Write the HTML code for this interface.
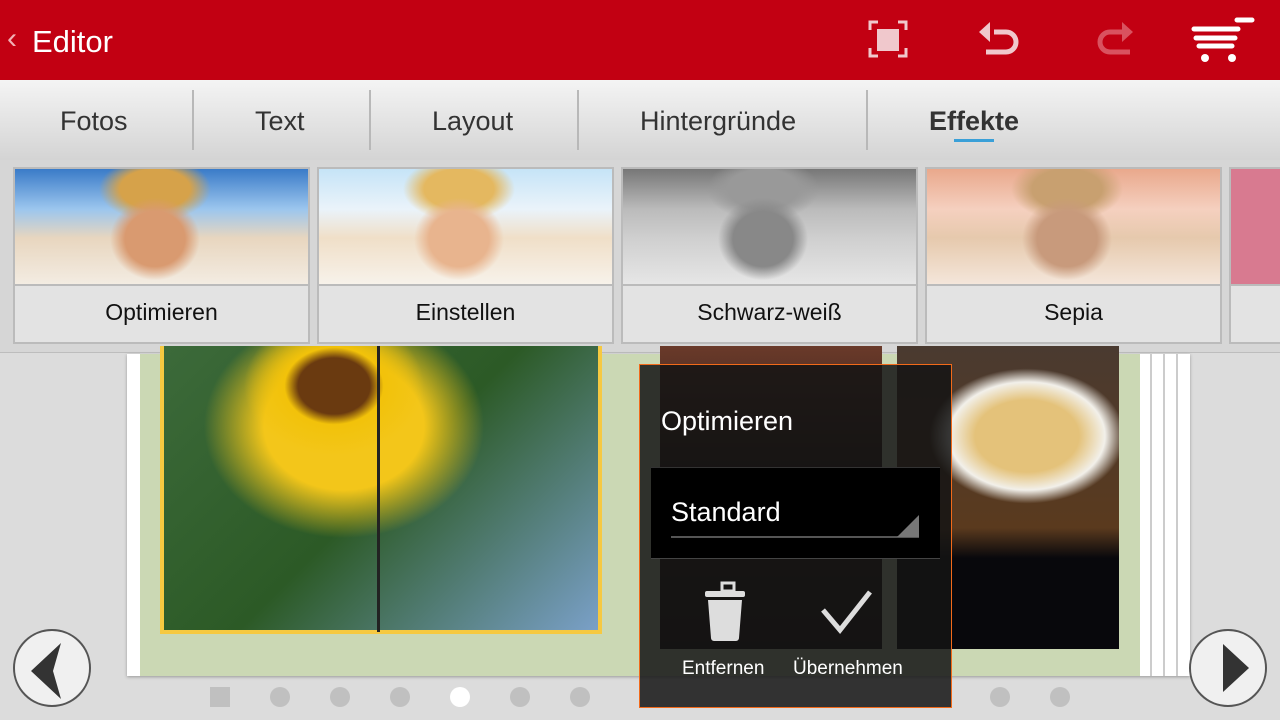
<!DOCTYPE html>
<html><head><meta charset="utf-8"><style>
*{margin:0;padding:0;box-sizing:border-box}
body{width:1280px;height:720px;overflow:hidden;background:#dcdcdc;font-family:"Liberation Sans",sans-serif;position:relative}
.abs{position:absolute}
#hdr{left:0;top:0;width:1280px;height:80px;background:#c20012}
#tabs{left:0;top:80px;width:1280px;height:80px;background:linear-gradient(#f4f4f4,#d4d4d4)}
.tab{position:absolute;top:106px;font-size:27px;color:#333}
.sep{position:absolute;top:90px;width:2px;height:60px;background:#b8b8b8}
#strip{left:0;top:160px;width:1280px;height:193px;background:#d6d6d6;border-bottom:1px solid #bdbdbd}
.th{position:absolute;top:167px;width:297px;height:177px;border:2px solid #bbb;background:#e3e3e3}
.th .im{height:117px;border-bottom:2px solid #bbb}
.th .lb{text-align:center;font-size:23px;color:#111;line-height:52px}
.dot{position:absolute;top:687px;width:20px;height:20px;border-radius:50%;background:#c0c0c0}
.nav{position:absolute;top:629px;width:78px;height:78px;border-radius:50%;border:2px solid #555;background:#f0f0f0}
</style></head><body>
<div id="hdr" class="abs"></div>
<div class="abs" style="left:7px;top:22px;color:#f2b0b5;font-size:30px">‹</div>
<div class="abs" style="left:32px;top:24px;color:#fff;font-size:31px">Editor</div>
<svg class="abs" style="left:860px;top:14px" width="400" height="56" viewBox="860 14 400 56">
<g fill="none" stroke="#f0c8cc" stroke-width="3"><path d="M870 30v-8h8M898 22h8v8M906 48v8h-8M878 56h-8v-8"/></g>
<rect x="877" y="29" width="22" height="22" fill="#f0c8cc"/>
<path d="M986 43h20a10 10 0 0 0 0-20h-12" fill="none" stroke="#f0c8cc" stroke-width="5" transform="translate(0,9)"/>
<path d="M979 32l11-10v20z" fill="#f0c8cc"/>
<path d="M1130 52h-20a10 10 0 0 1 0-20h12" fill="none" stroke="#d9525f" stroke-width="5"/>
<path d="M1133 32l-11-10v20z" fill="#d9525f"/>
<g stroke="#fff" stroke-width="5" stroke-linecap="round"><path d="M1237 20h15M1194 29h44M1196 38h39M1199 46h33"/></g>
<circle cx="1205" cy="58" r="4" fill="#fff"/><circle cx="1232" cy="58" r="4" fill="#fff"/>
</svg>
<div id="tabs" class="abs"></div>
<div class="tab" style="left:60px">Fotos</div><div class="sep" style="left:192px"></div>
<div class="tab" style="left:255px">Text</div><div class="sep" style="left:369px"></div>
<div class="tab" style="left:432px">Layout</div><div class="sep" style="left:577px"></div>
<div class="tab" style="left:640px">Hintergründe</div><div class="sep" style="left:866px"></div>
<div class="tab" style="left:929px;font-weight:bold">Effekte</div>
<div class="abs" style="left:954px;top:139px;width:40px;height:3px;background:#3aa0d8"></div>
<div id="strip" class="abs"></div>
<div class="th" style="left:13px"><div class="im" style="background:radial-gradient(ellipse 60px 55px at 140px 70px,#d99a70 50%,transparent 75%),radial-gradient(ellipse 70px 40px at 140px 20px,#d6a24a 50%,transparent 80%),linear-gradient(180deg,#3a7bc8 0%,#9cc6ee 35%,#e8d6bf 60%,#f3ece2 100%)"></div><div class="lb">Optimieren</div></div>
<div class="th" style="left:317px"><div class="im" style="background:radial-gradient(ellipse 60px 55px at 140px 70px,#e8b48e 50%,transparent 75%),radial-gradient(ellipse 70px 40px at 140px 20px,#e4b860 50%,transparent 80%),linear-gradient(180deg,#c6e4f7 0%,#eaf3fa 35%,#f0dfc8 60%,#f7f2ea 100%)"></div><div class="lb">Einstellen</div></div>
<div class="th" style="left:621px"><div class="im" style="background:radial-gradient(ellipse 60px 55px at 140px 70px,#888 50%,transparent 75%),radial-gradient(ellipse 70px 40px at 140px 20px,#999 50%,transparent 80%),linear-gradient(180deg,#777 0%,#bbb 35%,#cfcfcf 60%,#e6e6e6 100%)"></div><div class="lb">Schwarz-weiß</div></div>
<div class="th" style="left:925px"><div class="im" style="background:radial-gradient(ellipse 60px 55px at 140px 70px,#c89a7c 50%,transparent 75%),radial-gradient(ellipse 70px 40px at 140px 20px,#c8a070 50%,transparent 80%),linear-gradient(180deg,#e9a88c 0%,#f5d0bf 35%,#e6c9ad 60%,#f4e6da 100%)"></div><div class="lb">Sepia</div></div>
<div class="th" style="left:1229px"><div class="im" style="background:#d87a90"></div><div class="lb"></div></div>
<div class="abs" style="left:127px;top:354px;width:1063px;height:322px;background:#fff;box-shadow:0 1px 3px #999"></div>
<div class="abs" style="left:140px;top:354px;width:1000px;height:322px;background:#cbd8b4"></div>
<div class="abs" style="left:1150px;top:354px;width:2px;height:322px;background:#ccc"></div>
<div class="abs" style="left:1163px;top:354px;width:2px;height:322px;background:#ccc"></div>
<div class="abs" style="left:1176px;top:354px;width:2px;height:322px;background:#ccc"></div>
<div class="abs" style="left:160px;top:346px;width:442px;height:288px;border:4px solid #f6c941;border-top:none;background:radial-gradient(ellipse 90px 70px at 170px 40px,#6a3a10 40%,#f2c20a 55%,transparent 100%),radial-gradient(ellipse 200px 160px at 180px 80px,#f3c61a 40%,transparent 70%),linear-gradient(135deg,#3c6a3a,#2c5a26 50%,#7aa0c8 100%)"></div>
<div class="abs" style="left:377px;top:346px;width:3px;height:286px;background:#222"></div>
<div class="abs" style="left:660px;top:346px;width:222px;height:303px;background:linear-gradient(#6a3a2a,#2a1a14 40%,#1a1210)"></div>
<div class="abs" style="left:897px;top:346px;width:222px;height:303px;background:radial-gradient(ellipse 130px 90px at 130px 90px,#e4c27a 40%,#f2f0ea 60%,transparent 75%),linear-gradient(#4a3a30,#5a3a1e 60%,#08080c 70%)"></div>
<div class="abs" style="left:639px;top:364px;width:313px;height:344px;background:rgba(20,20,20,.85);border:1px solid #f26a1a"></div>
<div class="abs" style="left:661px;top:406px;color:#fff;font-size:27px">Optimieren</div>
<div class="abs" style="left:651px;top:467px;width:289px;height:92px;background:#000;border-top:1px solid #333;border-bottom:1px solid #444"></div>
<div class="abs" style="left:671px;top:497px;color:#fff;font-size:27px">Standard</div>
<div class="abs" style="left:671px;top:536px;width:248px;height:2px;background:#555"></div>
<div class="abs" style="left:897px;top:515px;width:0;height:0;border-left:22px solid transparent;border-bottom:22px solid #777"></div>
<svg class="abs" style="left:700px;top:580px" width="200" height="65"><rect x="22" y="3" width="12" height="8" fill="none" stroke="#ddd" stroke-width="3"/><rect x="5" y="11" width="40" height="6" rx="2" fill="#ddd"/><path d="M8 20h34l-3 38a3 3 0 0 1-3 3h-22a3 3 0 0 1-3-3z" fill="#ddd"/><path d="M123 30l17 20 30-38" fill="none" stroke="#ddd" stroke-width="5"/></svg>
<div class="abs" style="left:682px;top:658px;color:#fff;font-size:19px">Entfernen</div>
<div class="abs" style="left:793px;top:658px;color:#fff;font-size:19px">Übernehmen</div>
<div class="abs" style="left:210px;top:687px;width:20px;height:20px;background:#c0c0c0"></div>
<div class="dot" style="left:270px"></div><div class="dot" style="left:330px"></div><div class="dot" style="left:390px"></div>
<div class="dot" style="left:450px;background:#fff"></div><div class="dot" style="left:510px"></div><div class="dot" style="left:570px"></div>
<div class="dot" style="left:990px"></div><div class="dot" style="left:1050px"></div>
<div class="nav" style="left:13px"><svg width="74" height="74"><path d="M16 40l30-28-8 28 8 28z" fill="#333"/></svg></div>
<div class="nav" style="left:1189px"><svg width="74" height="74"><path d="M58 37l-26-24v48z" fill="#333"/></svg></div>
</body></html>
